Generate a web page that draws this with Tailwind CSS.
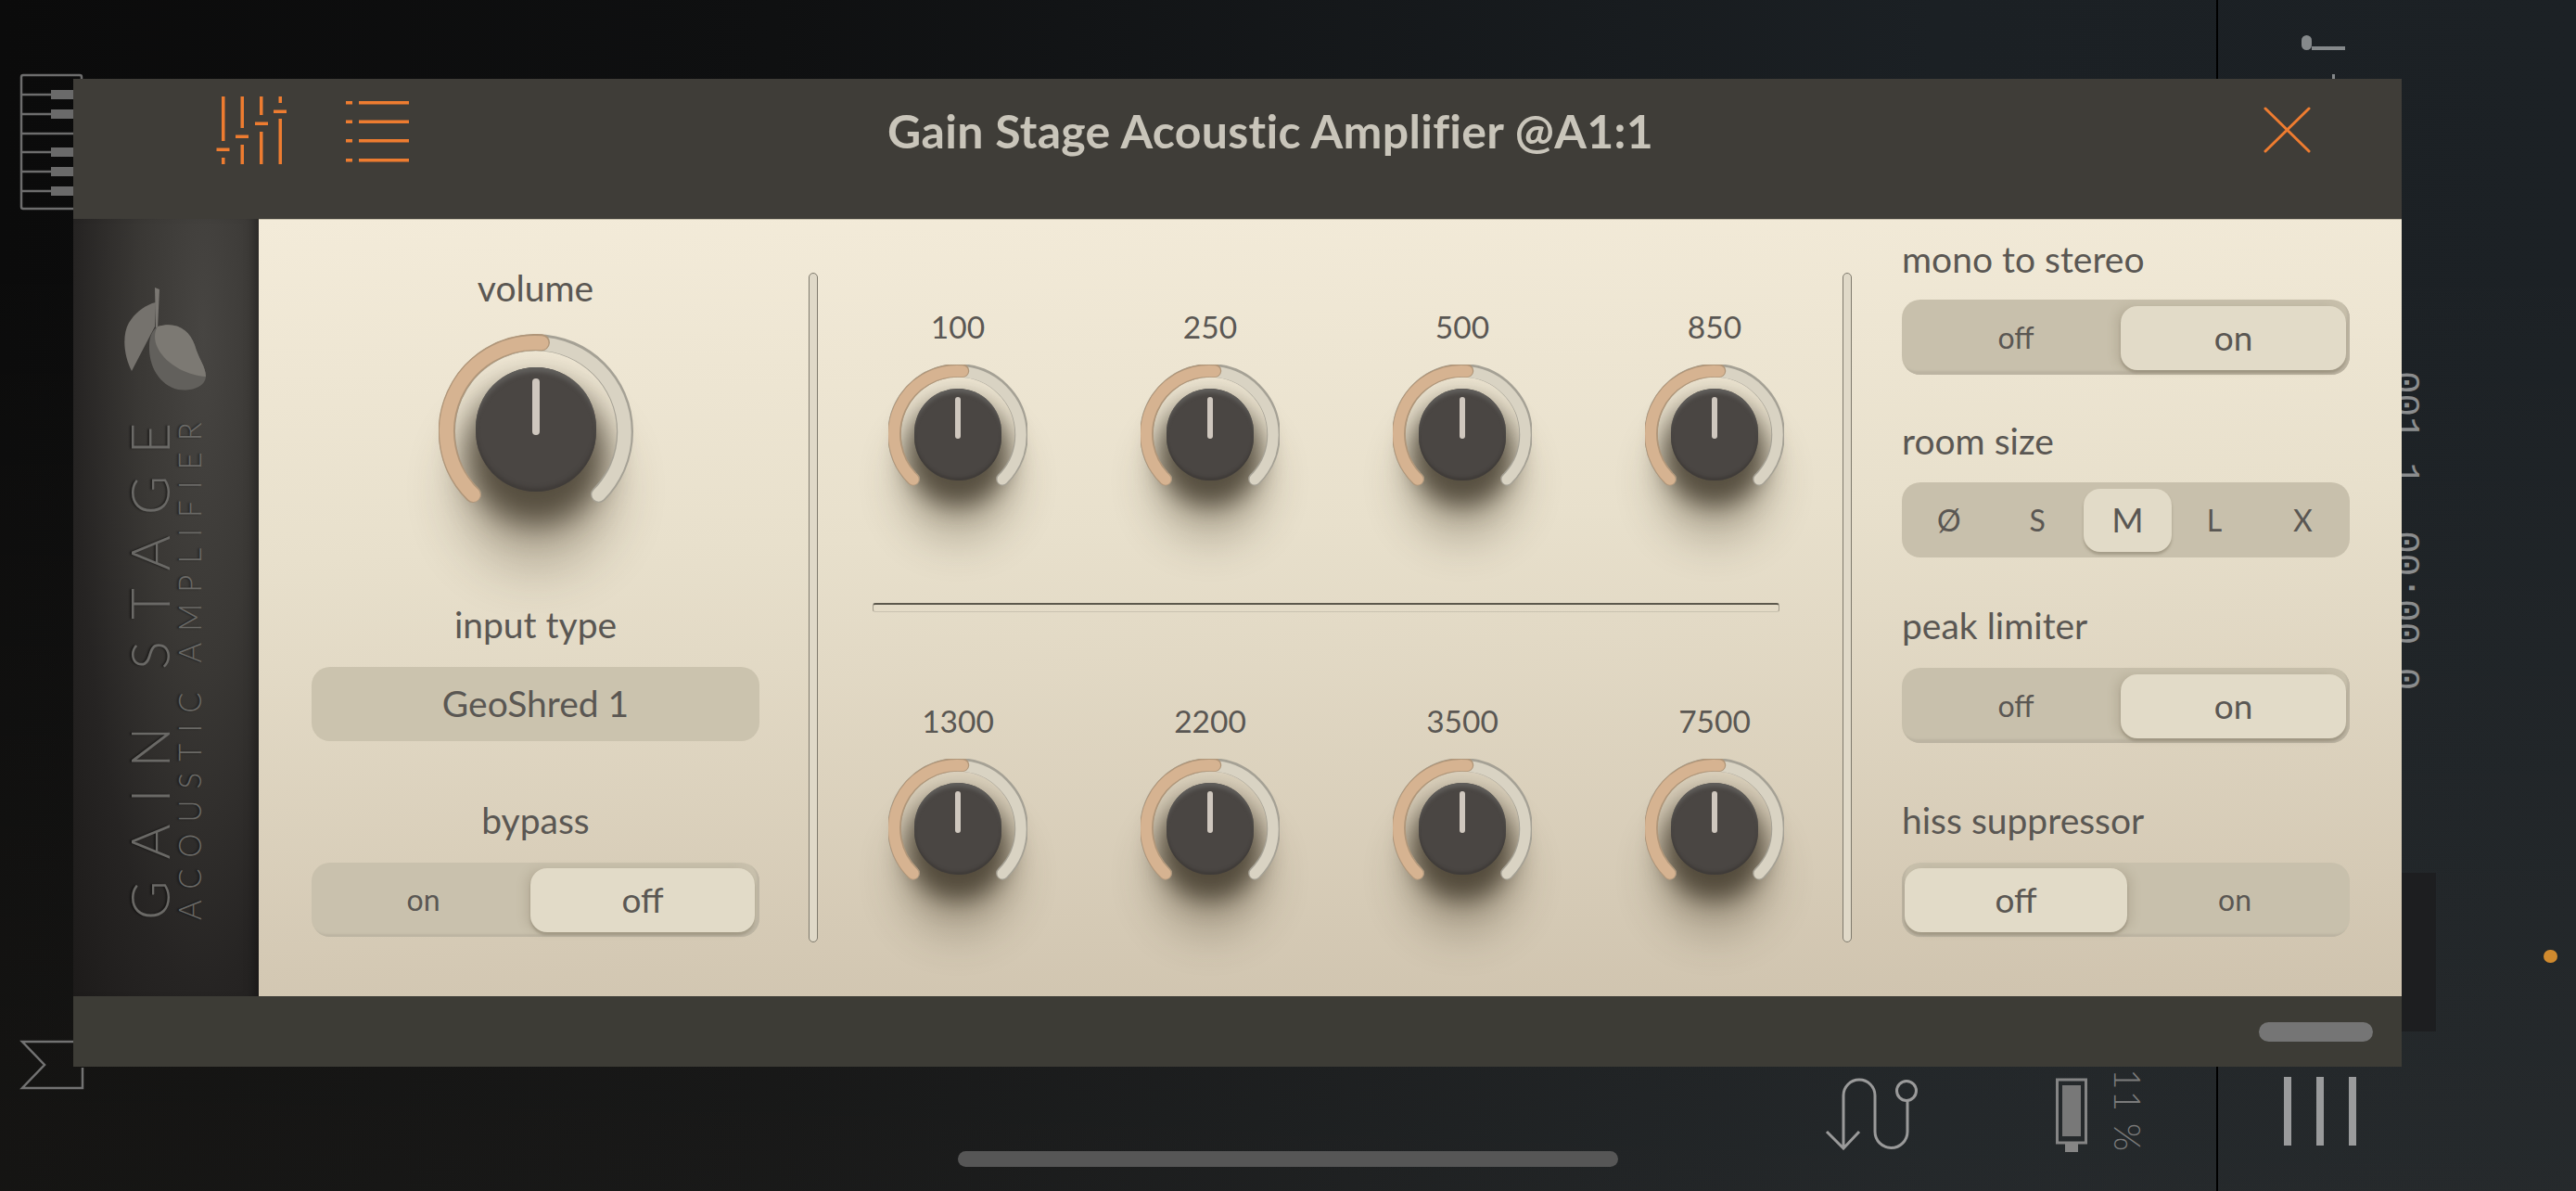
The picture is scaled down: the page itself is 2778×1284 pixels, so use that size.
<!DOCTYPE html>
<html lang="en">
<head>
<meta charset="utf-8"/>
<title>Gain Stage Acoustic Amplifier</title>
<script src="https://cdn.jsdelivr.net/npm/@tailwindcss/browser@4"></script>
</head>
<body class="m-0 bg-black">
<!-- shared knob rings -->
<svg class="hidden">
  <symbol id="ring-sm" viewBox="-75 -75 150 150">
    <path d="M-48.4 48.4A68.5 68.5 0 1 1 48.4 48.4" fill="none" stroke="#a5a195" stroke-width="14.5" stroke-linecap="round"/>
    <path d="M-48.2 48.8A68 68 0 1 1 48.2 48.8" fill="none" stroke="#d9d3c3" stroke-width="11.5" stroke-linecap="round"/>
    <path d="M-48.4 48.4A68.5 68.5 0 0 1 5 -68.3" fill="none" stroke="#b09679" stroke-width="14.5" stroke-linecap="round"/>
    <path d="M-48.2 48.8A68 68 0 0 1 5 -67.8" fill="none" stroke="#d6b391" stroke-width="12" stroke-linecap="round"/>
  </symbol>
  <symbol id="ring-lg" viewBox="-105 -105 210 210">
    <path d="M-68 68A96 96 0 1 1 68 68" fill="none" stroke="#a5a195" stroke-width="18" stroke-linecap="round"/>
    <path d="M-67.6 68.4A95.5 95.5 0 1 1 67.6 68.4" fill="none" stroke="#d9d3c3" stroke-width="14.5" stroke-linecap="round"/>
    <path d="M-68 68A96 96 0 0 1 6 -95.8" fill="none" stroke="#b09679" stroke-width="18" stroke-linecap="round"/>
    <path d="M-67.6 68.4A95.5 95.5 0 0 1 6 -95.3" fill="none" stroke="#d6b391" stroke-width="15" stroke-linecap="round"/>
  </symbol>
</svg>

<div class="relative w-[2778px] h-[1284px] overflow-hidden flex bg-[linear-gradient(180deg,transparent_20%,rgba(255,235,200,0.045)_100%),linear-gradient(90deg,#0b0b0b_0%,#0f1011_30%,#1b2024_75%,#1c2125_100%)] [font-family:Lato,sans-serif]">

  <!-- app behind the plugin window: left strip -->
  <div class="w-[100px] shrink-0 pl-[21px] pt-[79px] flex flex-col">
    <svg class="w-[70px] h-[148px]" viewBox="0 0 70 148" fill="none" stroke="#6d6d6d" stroke-width="2.5">
      <path d="M58 146H4Q2 146 2 144V4Q2 2 4 2H65Q67 2 67 4V10"/>
      <path d="M2 23H58M2 44H58M2 65H58M2 85H58M2 106H58M2 127H58"/>
      <path d="M34 23H58M34 44H58M34 85H58M34 106H58M34 127H58" stroke="#6a6a6a" stroke-width="10"/>
    </svg>
    <svg class="w-[70px] h-[54px] mt-[894px]" viewBox="0 0 70 54" fill="none" stroke="#727272" stroke-width="2.5">
      <path d="M60 2H3L27 27L3 52H68V30"/>
    </svg>
  </div>

  <!-- app behind: timeline area with the bottom tools -->
  <div class="w-[2290px] shrink-0 flex flex-col justify-end pb-[44px] pl-[1868px]">
    <div class="flex items-end">
      <svg class="w-[102px] h-[78px]" viewBox="1968 1159 102 78" fill="none" stroke="#9a9a9a" stroke-width="3">
        <path d="M1970 1217L1988 1235L2005 1217M1988 1235V1178a17 17 0 0 1 34 0V1217a17.5 17.5 0 0 0 35 0V1184"/>
        <circle cx="2056" cy="1173" r="10.5"/>
      </svg>
      <svg class="w-[38px] h-[82px] ml-[145px] -mb-[4px]" viewBox="0 0 38 82" fill="none">
        <rect x="3.5" y="2" width="31" height="68" stroke="#858585" stroke-width="3"/>
        <rect x="9" y="8" width="20" height="55" fill="#787878"/>
        <rect x="12" y="70" width="14" height="10" fill="#858585"/>
      </svg>
      <span class="ml-[23px] -mb-[2px] text-[39px] leading-[38px] tracking-[1px] font-light text-[#7b7b7b] [writing-mode:vertical-rl]">11 %</span>
    </div>
  </div>

  <!-- app behind: right panel -->
  <div class="relative flex-1 border-l-2 border-black flex flex-col items-start">
    <div class="flex items-end ml-[90px] mt-[38px] h-[16px]">
      <span class="w-[11px] h-[16px] rounded-full bg-[#85898b]"></span>
      <span class="w-[36px] h-[4px] bg-[#85898b]"></span>
    </div>
    <span class="ml-[123px] mt-[26px] w-[3px] h-[5px] bg-[#85898b]"></span>
    <div class="mt-[315px] ml-[184px] text-[41px] leading-[34px] font-['Liberation_Mono',monospace] text-[#8b8d8e] whitespace-pre [writing-mode:vertical-rl]">001.1  00:00.0</div>
    <div class="absolute left-[198px] top-[941px] w-[37px] h-[171px] bg-[#1d1e20]"></div>
    <span class="absolute left-[351px] top-[1024px] w-[15px] h-[14px] rounded-full bg-[#d08a2e]"></span>
    <div class="mt-auto mb-[49px] ml-[71px] flex gap-[27px]">
      <span class="w-[8px] h-[74px] bg-[#9a9b9c]"></span>
      <span class="w-[8px] h-[74px] bg-[#9a9b9c]"></span>
      <span class="w-[8px] h-[74px] bg-[#9a9b9c]"></span>
    </div>
  </div>

  <!-- home indicator -->
  <div class="absolute left-[1033px] top-[1241px] w-[712px] h-[17px] rounded-full bg-[#565656]"></div>

  <!-- plugin window -->
  <div class="absolute left-[79px] top-[85px] w-[2511px] h-[1065px] flex flex-col">
    <header class="relative h-[151px] bg-[#3f3d38] flex items-start pl-[152px] pt-[19px]">
      <svg class="w-[79px] h-[73px]" viewBox="-7 0 79 73" fill="#ee7c30">
        <rect x="1" y="0" width="3.5" height="48"/><rect x="-4.5" y="55.5" width="14" height="3.5"/><rect x="1" y="66" width="3.5" height="7"/>
        <rect x="21.5" y="0" width="3.5" height="34"/><rect x="16" y="41.5" width="14" height="3.5"/><rect x="21.5" y="52" width="3.5" height="21"/>
        <rect x="42" y="0" width="3.5" height="20"/><rect x="37" y="27.5" width="14" height="3.5"/><rect x="42" y="38" width="3.5" height="35"/>
        <rect x="62.5" y="0" width="3.5" height="7"/><rect x="57" y="14.5" width="14" height="3.5"/><rect x="62.5" y="24" width="3.5" height="49"/>
      </svg>
      <svg class="w-[68px] h-[66px] ml-[63px] mt-[5px]" viewBox="0 0 68 66" fill="#ee7c30">
        <rect x="0" y="0" width="7" height="3.5"/><rect x="14" y="0" width="54" height="3.5"/>
        <rect x="0" y="20.5" width="7" height="3.5"/><rect x="14" y="20.5" width="54" height="3.5"/>
        <rect x="0" y="41" width="7" height="3.5"/><rect x="14" y="41" width="54" height="3.5"/>
        <rect x="0" y="62" width="7" height="3.5"/><rect x="14" y="62" width="54" height="3.5"/>
      </svg>
      <h1 class="ml-[516px] mt-[2px] text-[50px] leading-[70px] font-bold tracking-[0.3px] text-[#c9c5ba] whitespace-nowrap">Gain Stage Acoustic Amplifier @A1:1</h1>
      <svg class="absolute right-[98px] top-[30px] w-[51px] h-[50px]" viewBox="0 0 51 50" fill="none" stroke="#ee7c30" stroke-width="3" stroke-linecap="round">
        <path d="M2 2L49 48M49 2L2 48"/>
      </svg>
    </header>

    <div class="h-[838px] flex">
      <!-- logo strip -->
      <aside class="w-[200px] shrink-0 flex flex-col items-start bg-[radial-gradient(ellipse_at_70%_15%,#474542_0%,#3a3835_35%,#262423_70%,#1d1b1a_100%)] shadow-[inset_-12px_0_12px_-8px_rgba(0,0,0,0.35)]">
        <svg class="w-[90px] h-[116px] ml-[54px] mt-[73px]" viewBox="133 309 90 116">
          <path d="M167 310L172 312L170 354L168 354Z" fill="#7a7772"/>
          <path d="M164 327L168 326L167 352L142 400C134 385 131 362 139 348C145 338 154 331 164 327Z" fill="#75726d"/>
          <path d="M170 352C190 346 204 355 210 372C214 387 222 395 222 406C221 418 205 422 192 420C172 415 160 395 161 372C161 364 164 356 170 352Z" fill="#62605c"/>
          <path d="M170 352C190 346 204 355 210 372C214 387 222 395 222 406C205 405 180 395 170 375C166 367 166 358 170 352Z" fill="#7c7973"/>
        </svg>
        <div class="ml-[59px] mt-[31px] flex rotate-180 h-[536px] text-[#6a6966] [text-shadow:0_-2px_2px_rgba(0,0,0,0.45)]">
          <span class="[writing-mode:vertical-rl] text-[33px] leading-[28px] font-light tracking-[12.1px] whitespace-nowrap">ACOUSTIC AMPLIFIER</span>
          <span class="[writing-mode:vertical-rl] ml-[6px] text-[58px] leading-[46px] font-light tracking-[23px] whitespace-nowrap">GAIN STAGE</span>
        </div>
      </aside>

      <!-- controls -->
      <main class="flex-1 flex bg-[linear-gradient(178deg,#f3ebd9_0%,#e8e0cc_40%,#cfc3ae_100%)] border-t border-[#c9c2ae] text-[#5a5753] text-[39px] leading-[44px]">
        <!-- left column -->
        <section class="w-[483px] ml-[57px] shrink-0 flex flex-col items-center pt-[51px]">
          <div class="h-[44px]">volume</div>
          <div class="relative w-[210px] h-[210px] mt-[28px]">
            <div class="absolute left-[40px] top-[36px] w-[130px] h-[134px] rounded-full bg-[#4a4643] shadow-[inset_0_7px_5px_-2px_#62605d,inset_0_-4px_4px_#3f3b38,0_26px_32px_10px_rgba(45,38,25,0.7),0_64px_56px_18px_rgba(70,60,40,0.32)] flex justify-center">
              <span class="w-[8px] h-[61px] mt-[12px] rounded-full bg-[#cfc7be]"></span>
            </div>
            <svg class="absolute inset-0 w-[210px] h-[210px]"><use href="#ring-lg"/></svg>
          </div>
          <div class="h-[44px] mt-[81px]">input type</div>
          <div class="w-full h-[80px] mt-[24px] rounded-[20px] bg-[#cbc3ae] flex items-center justify-center pb-[2px]">GeoShred 1</div>
          <div class="h-[44px] mt-[63px]">bypass</div>
          <div class="w-full h-[80px] mt-[24px] rounded-[20px] bg-[#c9c1ad] shadow-[inset_-3px_-3px_2px_#bdb5a3] flex pr-[5px] pt-[6px] pb-[5px]">
            <div class="flex-1 flex items-center justify-center text-[32px] pb-[2px] pl-[5px]">on</div>
            <div class="w-[242px] rounded-[18px] bg-[#e2dbc8] shadow-[0_3px_3px_rgba(120,110,90,0.45),-6px_0_10px_rgba(120,110,90,0.18)] flex items-center justify-center pb-[2px] text-[37px]">off</div>
          </div>
        </section>

        <div class="w-[10px] h-[722px] ml-[53px] mt-[57px] shrink-0 rounded-t-full rounded-b-full border border-[#7f7a6d] bg-[#e0d9c8]"></div>

        <!-- eq knobs -->
        <section class="w-[1105px] shrink-0 flex flex-col pt-[94px]">
          <div class="grid grid-cols-4 w-[1088px] ml-[15px] text-[33.5px] leading-[42px]">
            <div class="flex flex-col items-center">
              <div class="h-[44px]">100</div>
              <div class="relative w-[150px] h-[150px] mt-[18px]">
                <div class="absolute left-[28px] top-[26px] w-[94px] h-[99px] rounded-full bg-[#4a4643] shadow-[inset_0_6px_4px_-2px_#62605d,inset_0_-3px_3px_#3f3b38,0_20px_26px_8px_rgba(45,38,25,0.7),0_50px_46px_14px_rgba(70,60,40,0.3)] flex justify-center">
                  <span class="w-[6px] h-[45px] mt-[9px] rounded-full bg-[#cfc7be]"></span>
                </div>
                <svg class="absolute inset-0 w-[150px] h-[150px]"><use href="#ring-sm"/></svg>
              </div>
            </div>
            <div class="flex flex-col items-center">
              <div class="h-[44px]">250</div>
              <div class="relative w-[150px] h-[150px] mt-[18px]">
                <div class="absolute left-[28px] top-[26px] w-[94px] h-[99px] rounded-full bg-[#4a4643] shadow-[inset_0_6px_4px_-2px_#62605d,inset_0_-3px_3px_#3f3b38,0_20px_26px_8px_rgba(45,38,25,0.7),0_50px_46px_14px_rgba(70,60,40,0.3)] flex justify-center">
                  <span class="w-[6px] h-[45px] mt-[9px] rounded-full bg-[#cfc7be]"></span>
                </div>
                <svg class="absolute inset-0 w-[150px] h-[150px]"><use href="#ring-sm"/></svg>
              </div>
            </div>
            <div class="flex flex-col items-center">
              <div class="h-[44px]">500</div>
              <div class="relative w-[150px] h-[150px] mt-[18px]">
                <div class="absolute left-[28px] top-[26px] w-[94px] h-[99px] rounded-full bg-[#4a4643] shadow-[inset_0_6px_4px_-2px_#62605d,inset_0_-3px_3px_#3f3b38,0_20px_26px_8px_rgba(45,38,25,0.7),0_50px_46px_14px_rgba(70,60,40,0.3)] flex justify-center">
                  <span class="w-[6px] h-[45px] mt-[9px] rounded-full bg-[#cfc7be]"></span>
                </div>
                <svg class="absolute inset-0 w-[150px] h-[150px]"><use href="#ring-sm"/></svg>
              </div>
            </div>
            <div class="flex flex-col items-center">
              <div class="h-[44px]">850</div>
              <div class="relative w-[150px] h-[150px] mt-[18px]">
                <div class="absolute left-[28px] top-[26px] w-[94px] h-[99px] rounded-full bg-[#4a4643] shadow-[inset_0_6px_4px_-2px_#62605d,inset_0_-3px_3px_#3f3b38,0_20px_26px_8px_rgba(45,38,25,0.7),0_50px_46px_14px_rgba(70,60,40,0.3)] flex justify-center">
                  <span class="w-[6px] h-[45px] mt-[9px] rounded-full bg-[#cfc7be]"></span>
                </div>
                <svg class="absolute inset-0 w-[150px] h-[150px]"><use href="#ring-sm"/></svg>
              </div>
            </div>
          </div>

          <div class="w-[978px] h-[10px] ml-[59px] mt-[107px] rounded-[3px] border-t-2 border-t-[#5c584c] border-x border-x-[#a29c8c] border-b border-b-[#c9c2b0]"></div>

          <div class="grid grid-cols-4 w-[1088px] ml-[15px] mt-[96px] text-[33.5px] leading-[42px]">
            <div class="flex flex-col items-center">
              <div class="h-[44px]">1300</div>
              <div class="relative w-[150px] h-[150px] mt-[18px]">
                <div class="absolute left-[28px] top-[26px] w-[94px] h-[99px] rounded-full bg-[#4a4643] shadow-[inset_0_6px_4px_-2px_#62605d,inset_0_-3px_3px_#3f3b38,0_20px_26px_8px_rgba(45,38,25,0.7),0_50px_46px_14px_rgba(70,60,40,0.3)] flex justify-center">
                  <span class="w-[6px] h-[45px] mt-[9px] rounded-full bg-[#cfc7be]"></span>
                </div>
                <svg class="absolute inset-0 w-[150px] h-[150px]"><use href="#ring-sm"/></svg>
              </div>
            </div>
            <div class="flex flex-col items-center">
              <div class="h-[44px]">2200</div>
              <div class="relative w-[150px] h-[150px] mt-[18px]">
                <div class="absolute left-[28px] top-[26px] w-[94px] h-[99px] rounded-full bg-[#4a4643] shadow-[inset_0_6px_4px_-2px_#62605d,inset_0_-3px_3px_#3f3b38,0_20px_26px_8px_rgba(45,38,25,0.7),0_50px_46px_14px_rgba(70,60,40,0.3)] flex justify-center">
                  <span class="w-[6px] h-[45px] mt-[9px] rounded-full bg-[#cfc7be]"></span>
                </div>
                <svg class="absolute inset-0 w-[150px] h-[150px]"><use href="#ring-sm"/></svg>
              </div>
            </div>
            <div class="flex flex-col items-center">
              <div class="h-[44px]">3500</div>
              <div class="relative w-[150px] h-[150px] mt-[18px]">
                <div class="absolute left-[28px] top-[26px] w-[94px] h-[99px] rounded-full bg-[#4a4643] shadow-[inset_0_6px_4px_-2px_#62605d,inset_0_-3px_3px_#3f3b38,0_20px_26px_8px_rgba(45,38,25,0.7),0_50px_46px_14px_rgba(70,60,40,0.3)] flex justify-center">
                  <span class="w-[6px] h-[45px] mt-[9px] rounded-full bg-[#cfc7be]"></span>
                </div>
                <svg class="absolute inset-0 w-[150px] h-[150px]"><use href="#ring-sm"/></svg>
              </div>
            </div>
            <div class="flex flex-col items-center">
              <div class="h-[44px]">7500</div>
              <div class="relative w-[150px] h-[150px] mt-[18px]">
                <div class="absolute left-[28px] top-[26px] w-[94px] h-[99px] rounded-full bg-[#4a4643] shadow-[inset_0_6px_4px_-2px_#62605d,inset_0_-3px_3px_#3f3b38,0_20px_26px_8px_rgba(45,38,25,0.7),0_50px_46px_14px_rgba(70,60,40,0.3)] flex justify-center">
                  <span class="w-[6px] h-[45px] mt-[9px] rounded-full bg-[#cfc7be]"></span>
                </div>
                <svg class="absolute inset-0 w-[150px] h-[150px]"><use href="#ring-sm"/></svg>
              </div>
            </div>
          </div>
        </section>

        <div class="w-[10px] h-[722px] mt-[57px] shrink-0 rounded-t-full rounded-b-full border border-[#7f7a6d] bg-[#e0d9c8]"></div>

        <!-- right column -->
        <section class="w-[483px] ml-[54px] shrink-0 flex flex-col pt-[20px]">
          <div class="h-[44px]">mono to stereo</div>
          <div class="h-[81px] mt-[22px] rounded-[20px] bg-[#c8c0ac] shadow-[inset_-3px_-4px_2px_#bcb4a2] flex pr-[4px] pt-[7px] pb-[5px]">
            <div class="flex-1 flex items-center justify-center text-[32px] pb-[2px] pl-[10px]">off</div>
            <div class="w-[243px] rounded-[18px] bg-[#e2dbc8] shadow-[0_3px_3px_rgba(120,110,90,0.45),-6px_0_10px_rgba(120,110,90,0.18)] flex items-center justify-center pb-[2px] text-[37px]">on</div>
          </div>
          <div class="h-[44px] mt-[49px]">room size</div>
          <div class="h-[81px] mt-[23px] rounded-[20px] bg-[#c8c0ac] grid grid-cols-5 items-center text-center text-[32px] px-[3px]">
            <div>Ø</div>
            <div>S</div>
            <div class="h-[68px] ml-[2px] -mr-[2px] rounded-[18px] bg-[#e2dbc8] text-[37px] leading-[66px] shadow-[0_3px_3px_rgba(120,110,90,0.45)]">M</div>
            <div>L</div>
            <div>X</div>
          </div>
          <div class="h-[44px] mt-[51px]">peak limiter</div>
          <div class="h-[81px] mt-[24px] rounded-[20px] bg-[#c8c0ac] shadow-[inset_-3px_-4px_2px_#bcb4a2] flex pr-[4px] pt-[7px] pb-[5px]">
            <div class="flex-1 flex items-center justify-center text-[32px] pb-[2px] pl-[10px]">off</div>
            <div class="w-[243px] rounded-[18px] bg-[#e2dbc8] shadow-[0_3px_3px_rgba(120,110,90,0.45),-6px_0_10px_rgba(120,110,90,0.18)] flex items-center justify-center pb-[2px] text-[37px]">on</div>
          </div>
          <div class="h-[44px] mt-[61px]">hiss suppressor</div>
          <div class="h-[80px] mt-[24px] rounded-[20px] bg-[#c8c0ac] shadow-[inset_3px_-3px_2px_#bcb4a2] flex pl-[3px] pt-[6px] pb-[5px]">
            <div class="w-[240px] rounded-[18px] bg-[#e2dbc8] shadow-[0_3px_3px_rgba(120,110,90,0.45),6px_0_10px_rgba(120,110,90,0.18)] flex items-center justify-center pb-[2px] text-[37px]">off</div>
            <div class="flex-1 flex items-center justify-center text-[32px] pb-[2px] pr-[8px]">on</div>
          </div>
        </section>
      </main>
    </div>

    <footer class="h-[76px] bg-[#3d3c36] flex justify-end pt-[28px] pr-[31px]">
      <div class="w-[123px] h-[21px] rounded-full bg-[#757575]"></div>
    </footer>
  </div>
</div>
</body>
</html>
